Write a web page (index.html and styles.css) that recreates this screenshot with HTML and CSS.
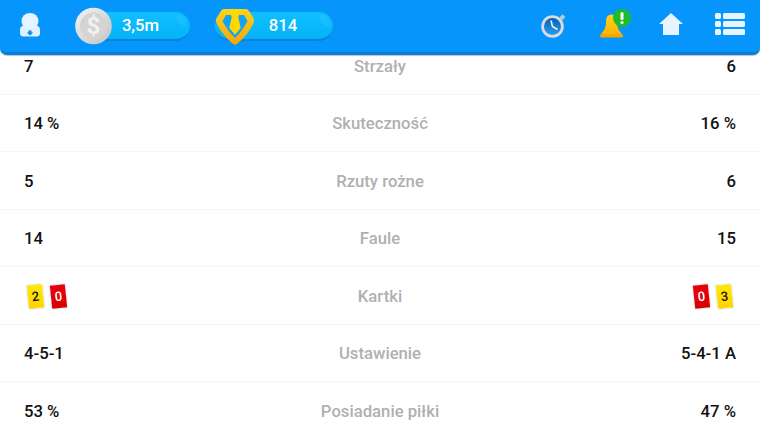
FILE: index.html
```html
<!DOCTYPE html>
<html lang="pl">
<head>
<meta charset="utf-8">
<title>Statystyki meczu</title>
<link rel="stylesheet" href="styles.css">
</head>
<body>
<div class="screen">
  <main class="stats">
    <div class="row"><span class="val">7</span><span class="label">Strzały</span><span class="val right">6</span></div>
    <div class="row"><span class="val">14 %</span><span class="label">Skuteczność</span><span class="val right">16 %</span></div>
    <div class="row"><span class="val">5</span><span class="label">Rzuty rożne</span><span class="val right">6</span></div>
    <div class="row"><span class="val">14</span><span class="label">Faule</span><span class="val right">15</span></div>
    <div class="row">
      <span class="val cards"><span class="card yellow">2</span><span class="card red">0</span></span>
      <span class="label">Kartki</span>
      <span class="val right cards"><span class="card red">0</span><span class="card yellow">3</span></span>
    </div>
    <div class="row"><span class="val">4-5-1</span><span class="label">Ustawienie</span><span class="val right">5-4-1 A</span></div>
    <div class="row"><span class="val">53 %</span><span class="label">Posiadanie piłki</span><span class="val right">47 %</span></div>
  </main>
  <header class="topbar">
    <div class="group-left">
      <svg class="ic-user" width="20" height="24" viewBox="0 0 20 24">
        <path d="M0 16.500c0-2 1.500-3.500 4-4.500h12c2.500 1 4 2.500 4 4.500V20c0 2-1 3.500-3 3.500H3c-2 0-3-1.500-3-3.500z" fill="#dff0ff"/>
        <ellipse cx="10" cy="8" rx="8.500" ry="8" fill="#e6f4ff"/>
        <path d="M8.500 17.500h3v2h1.800L10 22.500l-3.300-3h1.800z" fill="#0a8cf0"/>
      </svg>
      <div class="pill coin-pill">
        <svg class="pill-ic" width="37" height="38" viewBox="0 0 37 38">
          <defs>
            <linearGradient id="coinRim" x1="0" y1="0" x2="1" y2="1">
              <stop offset="0" stop-color="#f4f4f4"/>
              <stop offset="1" stop-color="#c2c2c2"/>
            </linearGradient>
          </defs>
          <circle cx="18.500" cy="19" r="18.300" fill="url(#coinRim)"/>
          <circle cx="18.500" cy="19" r="13.500" fill="#d4d4d4"/>
          <text x="18.500" y="27" text-anchor="middle" class="dollar">$</text>
        </svg>
        <span class="pill-text">3,5m</span>
      </div>
      <div class="pill badge-pill">
        <svg class="pill-ic badge" width="40" height="38" viewBox="0 0 40 38">
          <defs>
            <linearGradient id="badgeRim" x1="0" y1="0" x2="0" y2="1">
              <stop offset="0" stop-color="#ffd21a"/>
              <stop offset="1" stop-color="#f2a60c"/>
            </linearGradient>
          </defs>
          <path d="M9 1H31Q33 1 34 3L38.500 10Q40 12 38.500 15Q33 27 22 36Q20 37.500 18 36Q7 27 1.500 15Q0 12 1.500 10L6 3Q7 1 9 1z" fill="url(#badgeRim)"/>
          <path d="M11 7H29L32.500 13Q28 22 20 30Q12 22 7.500 13z" fill="#11a4f6"/>
          <path d="M13.300 1H26.700L23.300 9 25.700 20 20 26.700 14.300 20 16.700 9z" fill="#ffd800"/>
        </svg>
        <span class="pill-text">814</span>
      </div>
    </div>
    <div class="group-right">
      <svg class="ic-clock" width="24" height="24" viewBox="0 0 24 24">
        <defs>
          <linearGradient id="clockFace" x1="0" y1="0" x2="0" y2="1">
            <stop offset="0" stop-color="#0b5fb4"/>
            <stop offset="1" stop-color="#2a9dea"/>
          </linearGradient>
        </defs>
        <rect x="19.500" y="1" width="4" height="4.500" fill="#bcc8d0" transform="rotate(40 21.500 3)"/>
        <circle cx="11.500" cy="12.500" r="11.300" fill="#d5dde3"/>
        <circle cx="11.500" cy="12.500" r="8.500" fill="url(#clockFace)"/>
        <path d="M10 6.500L11.500 12.500l5 3" stroke="#e8f6ff" stroke-width="1.600" fill="none"/>
      </svg>
      <svg class="ic-bell" width="32" height="30" viewBox="0 0 32 30">
        <defs>
          <linearGradient id="bellBody" x1="0" y1="0" x2="0" y2="1">
            <stop offset="0" stop-color="#ffd21a"/>
            <stop offset="1" stop-color="#ffb400"/>
          </linearGradient>
        </defs>
        <path d="M12.500 5.500C8 5.500 7 9 7 14C7 20 4 22 2 25.500H23C21 22 18 20 18 14C18 9 17 5.500 12.500 5.500z" fill="url(#bellBody)"/>
        <rect x="1" y="25" width="23" height="3.500" rx="1.500" fill="#f2a600"/>
        <circle cx="23" cy="9" r="9" fill="#20bb2a"/>
        <rect x="21.500" y="3.200" width="3" height="7.800" rx="1.300" fill="#fff"/>
        <circle cx="23" cy="13.500" r="1.600" fill="#fff"/>
      </svg>
      <svg class="ic-home" width="24" height="22" viewBox="0 0 24 22">
        <path d="M12 0L24 11H20V22H4V11H0z" fill="#e6f4ff"/>
      </svg>
      <svg width="30" height="22" viewBox="0 0 30 22">
        <rect x="0" y="0" width="6" height="6" rx="1.500" fill="#e6f4ff"/>
        <rect x="8" y="0" width="22" height="6" rx="1.500" fill="#e6f4ff"/>
        <rect x="0" y="8" width="6" height="6" rx="1.500" fill="#e6f4ff"/>
        <rect x="8" y="8" width="22" height="6" rx="1.500" fill="#e6f4ff"/>
        <rect x="0" y="16" width="6" height="6" rx="1.500" fill="#e6f4ff"/>
        <rect x="8" y="16" width="22" height="6" rx="1.500" fill="#e6f4ff"/>
      </svg>
    </div>
  </header>
</div>
</body>
</html>
```
FILE: styles.css
```css
* { box-sizing: border-box; }
html, body { margin: 0; height: 100%; }
body { background: #fff; font-family: Roboto, "Liberation Sans", sans-serif; }
.screen { position: relative; width: 760px; height: 428px; overflow: hidden; }

.topbar {
  position: absolute;
  top: 0;
  left: 0;
  width: 760px;
  height: 55px;
  padding: 0 15px 5px 20px;
  display: flex;
  justify-content: space-between;
  align-items: center;
  background: #0695fb;
  border-bottom: 3px solid #0a7ddc;
  border-radius: 0 0 7px 7px;
  box-shadow: 0 1px 1px rgba(0,0,0,.25);
}
.group-left { display: flex; align-items: center; margin-top: 6px; }
.group-right { display: flex; align-items: center; }
.group-right svg { display: block; }
.ic-clock { margin: 5px 34px 0 0; }
.ic-bell { margin: 0 28px 0 0; }
.ic-home { margin-right: 32px; }

.ic-user { display: block; margin: 0 35px 4px 0; }
.pill {
  position: relative;
  height: 29px;
  border-radius: 15px;
  background: linear-gradient(#11c0ff, #04b2f8);
  border-bottom: 2px solid #0b82d8;
  display: flex;
  align-items: center;
  color: #fff;
  font-size: 16.700px;
  font-weight: 500;
}
.pill::after {
  content: "";
  position: absolute;
  right: 3px;
  top: 3px;
  width: 10px;
  height: 12px;
  border-radius: 0 10px 0 10px;
  background: rgba(255,255,255,.06);
}
.pill-ic { position: absolute; z-index: 1; left: 0; top: 50%; transform: translateY(-50%); display: block; }
.pill-ic.badge { top: calc(50% + 1px); }
.coin-pill { width: 115px; margin-right: 25px; }
.badge-pill { width: 118px; }
.pill-text { display: block; width: 100%; text-align: center; padding-left: 18px; }
.coin-pill .pill-text { padding-left: 16px; }
.dollar { font-size: 24px; font-weight: 700; fill: #f1f1f1; font-family: Roboto, sans-serif; }

.stats { margin-top: 37px; display: block; }
.row {
  height: 57.500px;
  padding: 2px 24px 0;
  display: grid;
  grid-template-columns: 1fr auto 1fr;
  align-items: center;
  border-bottom: 1px solid #f5f5f5;
}
.val { font-size: 16.700px; font-weight: 500; color: #111; }
.right { text-align: right; }
.label { font-size: 16.700px; font-weight: 500; color: #b0b0b0; text-align: center; }
.cards { display: flex; gap: 8px; padding-left: 4px; }
.cards.right { justify-content: flex-end; padding: 0 4px 0 0; }
.card {
  width: 15px;
  height: 23px;
  display: flex;
  align-items: center;
  justify-content: center;
  font-size: 13px;
  font-weight: 500;
  transform: rotate(-6deg);
  box-shadow: 0 0 2px rgba(0,0,0,.3);
}
.yellow { background: linear-gradient(#ffe900, #ffd400); color: #111; }
.red { background: linear-gradient(#e8000c, #d80000); color: #fff; }
```
